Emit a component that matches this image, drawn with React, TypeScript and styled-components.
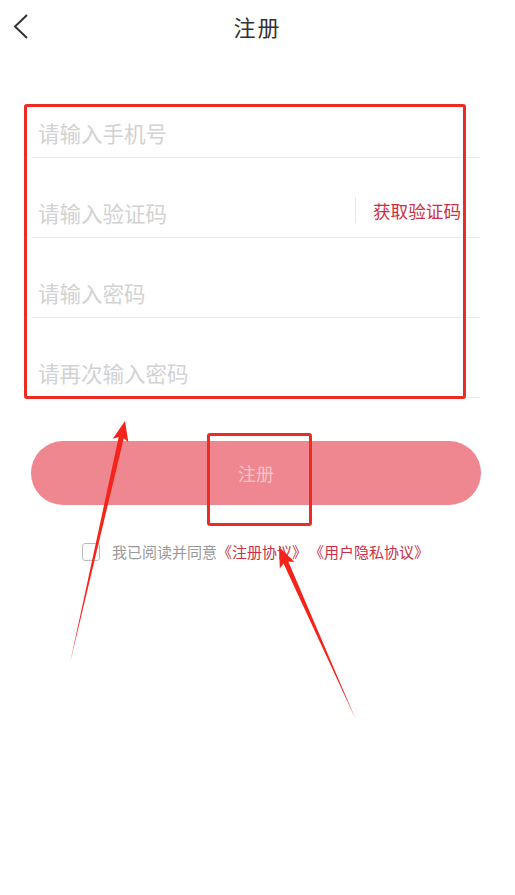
import React from "react";
import styled, { createGlobalStyle } from "styled-components";

const GlobalStyle = createGlobalStyle`
  html, body {
    margin: 0;
    padding: 0;
    background: #ffffff;
  }
  body {
    font-family: "Noto Sans CJK SC", "Noto Sans", sans-serif;
  }
`;

type Pt = [number, number];

// tapered annotation arrow, thin at the tail and thick near the head
function arrowPoints(tail: Pt, tip: Pt) {
  const dx = tip[0] - tail[0];
  const dy = tip[1] - tail[1];
  const len = Math.hypot(dx, dy);
  const ux = dx / len;
  const uy = dy / len;
  const nx = -uy;
  const ny = ux;
  const headLen = 20;
  const headW = 8;
  const shaftW = 2.6;
  const bx = tip[0] - ux * headLen;
  const by = tip[1] - uy * headLen;
  const pts: Pt[] = [
    [tail[0], tail[1]],
    [bx + nx * shaftW + ux * 3, by + ny * shaftW + uy * 3],
    [bx + nx * headW, by + ny * headW],
    [tip[0], tip[1]],
    [bx - nx * headW, by - ny * headW],
    [bx - nx * shaftW + ux * 3, by - ny * shaftW + uy * 3],
  ];
  return pts.map((p) => p.join(",")).join(" ");
}

function Register() {
  return (
    <>
      <Page>
        <Header>
          <BackButton>
            <svg width="20" height="28" viewBox="0 0 20 28">
              <polyline
                points="15,2 3,13.5 15,25"
                fill="none"
                stroke="#333"
                strokeWidth="2"
              />
            </svg>
          </BackButton>
          <Title>注册</Title>
        </Header>

        <Form>
          <Row>
            <Field placeholder="请输入手机号" />
          </Row>
          <Row>
            <Field placeholder="请输入验证码" />
            <CodeButton>获取验证码</CodeButton>
          </Row>
          <Row>
            <Field type="password" placeholder="请输入密码" />
          </Row>
          <Row>
            <Field type="password" placeholder="请再次输入密码" />
          </Row>
        </Form>

        <SubmitButton>注册</SubmitButton>

        <Agreement>
          <CheckBox />
          <AgreeText>我已阅读并同意</AgreeText>
          <AgreeLink>《注册协议》</AgreeLink>
          <AgreeLink>《用户隐私协议》</AgreeLink>
        </Agreement>
      </Page>

      <MarkBox $left={24} $top={104} $width={442} $height={295} />
      <MarkBox $left={207} $top={433} $width={105} $height={93} />
      <ArrowLayer width="515" height="895" viewBox="0 0 515 895">
        <polygon points={arrowPoints([70, 663], [125, 421])} fill="#f5231a" />
        <polygon points={arrowPoints([356, 720], [279, 547])} fill="#f5231a" />
      </ArrowLayer>
    </>
  );
}

const Page = styled.div`
  position: relative;
  width: 515px;
  min-height: 895px;
  background: #ffffff;
`;

const Header = styled.div`
  position: relative;
  height: 56px;
  display: flex;
  align-items: center;
  justify-content: center;
`;

const BackButton = styled.div`
  position: absolute;
  left: 12px;
  top: 13px;
  width: 20px;
  height: 28px;
`;

const Title = styled.div`
  font-size: 22px;
  color: #333333;
  letter-spacing: 2px;
  margin-bottom: 4px;
`;

const Form = styled.div`
  margin: 22px 35px 0 31px;
  display: flex;
  flex-direction: column;
`;

const Row = styled.div`
  height: 80px;
  border-bottom: 1px solid #ebebeb;
  display: flex;
  align-items: flex-end;
  padding-bottom: 12px;
  box-sizing: border-box;
`;

const Field = styled.input`
  flex: 1;
  min-width: 0;
  border: none;
  outline: none;
  background: transparent;
  padding: 0 0 0 7px;
  height: 26px;
  font-size: 21.5px;
  font-family: "Noto Sans CJK SC", "Noto Sans", sans-serif;
  color: #333;

  &::placeholder {
    color: #d2d2d2;
  }
`;

const CodeButton = styled.div`
  display: flex;
  align-items: center;
  height: 26px;
  margin-bottom: 2px;
  padding: 0 19px 0 17px;
  border-left: 1px solid #e6e6e6;
  font-size: 17.6px;
  color: #cc2f45;
  white-space: nowrap;
`;

const SubmitButton = styled.div`
  margin: 43px 34px 0 31px;
  height: 64px;
  border-radius: 32px;
  background: #ef8790;
  display: flex;
  align-items: center;
  justify-content: center;
  font-size: 18px;
  color: #f8c4c8;
`;

const Agreement = styled.div`
  margin-top: 36px;
  padding-left: 82px;
  display: flex;
  align-items: center;
  font-size: 15px;
`;

const CheckBox = styled.div`
  width: 16px;
  height: 16px;
  border: 1px solid #bbbbbb;
  border-radius: 3px;
  margin-right: 12px;
`;

const AgreeText = styled.span`
  color: #999999;
`;

const AgreeLink = styled.span`
  color: #cc2f45;
  &:last-child {
    margin-left: 2px;
  }
`;

const MarkBox = styled.div<{
  $left: number;
  $top: number;
  $width: number;
  $height: number;
}>`
  position: absolute;
  left: ${(p) => p.$left}px;
  top: ${(p) => p.$top}px;
  width: ${(p) => p.$width}px;
  height: ${(p) => p.$height}px;
  box-sizing: border-box;
  border: 3px solid #ec2b22;
  border-radius: 3px;
  pointer-events: none;
`;

const ArrowLayer = styled.svg`
  position: absolute;
  left: 0;
  top: 0;
  pointer-events: none;
`;

export default function App() {
  return (
    <>
      <GlobalStyle />
      <Register />
    </>
  );
}
